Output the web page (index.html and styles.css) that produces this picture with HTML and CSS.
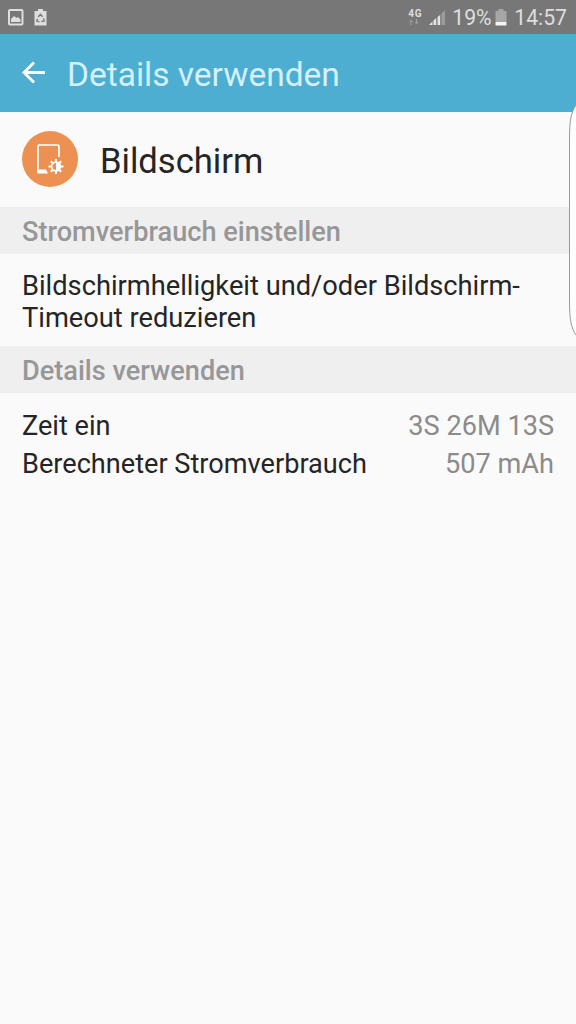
FILE: index.html
```html
<!DOCTYPE html>
<html lang="de">
<head>
<meta charset="utf-8">
<title>Details verwenden</title>
<link rel="stylesheet" href="styles.css">
</head>
<body>
<div class="screen">
  <div class="status">
    <svg class="status-icons" width="60" height="34" viewBox="0 0 60 34">
      <path d="M10 10h11.500q1 0 1 1v12.500q0 1-1 1H10q-1 0-1-1V11q0-1 1-1z" fill="none" stroke="#dedede" stroke-width="2"/>
      <path d="M11 22v-3l3-3 2.500 2 1.500-1 2.500 2.500V22z" fill="#dedede"/>
      <path d="M38 9h5v2h3.500v14.500h-12V11H38z" fill="#dedede"/>
      <path d="M38.200 17l2.200-2.800 2.200 2.500M43.600 18.300l.6 2.700-2.900.6M39.500 21.800l-2.700-.7.8-2.400" fill="none" stroke="#777" stroke-width="1.300"/>
    </svg>
    <div class="status-right">
      <div class="network">4G
        <svg width="12" height="6" viewBox="0 0 12 6"><path d="M3 6V2M1.500 3L3 1l1.500 2M8.500 0v4M7 3l1.500 2L10 3" fill="none" stroke="#a0a0a0"/></svg>
      </div>
      <svg class="signal" width="18" height="17" viewBox="0 0 18 17">
        <path d="M0 16l3.500-3.500V16zM4.500 11.500L7.200 9v7H4.500zM8.500 8l2.700-2v10H8.500z" fill="#e4e4e4"/>
        <path d="M12.500 4.500L16 1v15h-3.500z" fill="#9c9c9c"/>
      </svg>
      <span class="percent">19%</span>
      <svg class="battery" width="12" height="17" viewBox="0 0 12 17">
        <path d="M3.500 0h5v2H11.500v11H.5V2h3z" fill="#a6a6a6"/><path d="M.5 13h11v3.500H.5z" fill="#f4f4f4"/>
      </svg>
      <span class="clock">14:57</span>
    </div>
  </div>
  <div class="header">
    <svg class="back" width="24" height="24" viewBox="0 0 24 24"><path d="M23 11.500H2M12 1.500L2 11.500l10 10" fill="none" stroke="#fff" stroke-width="2.800"/></svg>
    <span class="header-title">Details verwenden</span>
  </div>
  <div class="app">
    <svg class="app-icon" width="56" height="56" viewBox="0 0 56 56">
      <circle cx="28" cy="28" r="28" fill="#ed9152"/>
      <path d="M16 41V15.500q0-1.500 1.500-1.500h18q1.500 0 1.500 1.500V26" fill="none" stroke="#fff" stroke-width="1.700"/>
      <path d="M15.200 38.500H24l2 4H16.500q-1.300 0-1.300-1.300z" fill="#fff"/>
      <g transform="translate(34 35.500)">
        <path d="M0-7.500V7.500M-7.500 0H7.500M-5.200-5.200L5.200 5.200M5.200-5.200L-5.200 5.200" stroke="#fff" stroke-width="2"/>
        <circle r="5.200" fill="#fff"/>
        <path d="M0-3.600A3.600 3.600 0 0 0 0 3.600z" fill="#ed9152"/>
      </g>
    </svg>
    <span class="app-name">Bildschirm</span>
  </div>
  <div class="section">Stromverbrauch einstellen</div>
  <div class="advice">Bildschirmhelligkeit und/oder Bildschirm-<br>Timeout reduzieren</div>
  <div class="section">Details verwenden</div>
  <div class="details">
    <div class="row"><span>Zeit ein</span><span class="value">3S 26M 13S</span></div>
    <div class="row"><span>Berechneter Stromverbrauch</span><span class="value">507 mAh</span></div>
  </div>
  <svg class="edge" width="8" height="236" viewBox="0 0 8 236">
    <path d="M8 3C3 10 1.500 20 1.500 36V200C1.500 216 3 226 8 233z" fill="#fdfdfd" fill-opacity=".96"/>
    <path d="M8 3C3 10 1.500 20 1.500 36V200C1.500 216 3 226 8 233" fill="none" stroke="#999"/>
  </svg>
</div>
</body>
</html>
```
FILE: styles.css
```css
body {
  margin: 0;
  font-family: Roboto, "Liberation Sans", sans-serif;
}
.screen {
  position: relative;
  width: 576px;
  height: 1024px;
  overflow: hidden;
  background: #fafafa;
  color: #252525;
}
svg {
  display: block;
  flex: none;
}
.status {
  display: flex;
  justify-content: space-between;
  height: 34px;
  background: #777;
  color: #dedede;
}
.status-right {
  display: flex;
  padding-right: 9px;
  font-size: 21.200px;
  line-height: 36px;
  white-space: nowrap;
}
.network {
  width: 21px;
  padding-top: 8px;
  font-size: 10px;
  font-weight: 700;
  letter-spacing: 0.8px;
  line-height: 11px;
}
.signal {
  margin: 9px 5px 0 0;
}
.percent {
  width: 43px;
}
.battery {
  margin: 9px 7px 0 0;
}
.header {
  display: flex;
  align-items: center;
  height: 78px;
  padding-left: 22px;
  background: #4daed1;
}
.header-title {
  margin: 3px 0 0 21px;
  color: #d3f0fb;
  font-size: 33.500px;
  line-height: 40px;
}
.app {
  display: flex;
  align-items: center;
  box-sizing: border-box;
  height: 95px;
  padding-left: 22px;
}
.app-icon {
  margin-bottom: 1px;
}
.app-name {
  margin: 3px 0 0 22px;
  font-size: 34.600px;
  line-height: 40px;
}
.section {
  height: 47px;
  padding-left: 22px;
  background: #efefef;
  color: #979797;
  font-size: 27.150px;
  font-weight: 500;
  line-height: 51px;
}
.advice {
  box-sizing: border-box;
  height: 92px;
  padding: 16px 0 0 22px;
  font-size: 27.250px;
  line-height: 32px;
  white-space: nowrap;
}
.details {
  padding: 14px 22px 0;
  font-size: 27.150px;
  line-height: 38px;
}
.row {
  display: flex;
  justify-content: space-between;
}
.value {
  color: #8b8b8b;
}
.edge {
  position: absolute;
  top: 102px;
  right: 0;
}
```
